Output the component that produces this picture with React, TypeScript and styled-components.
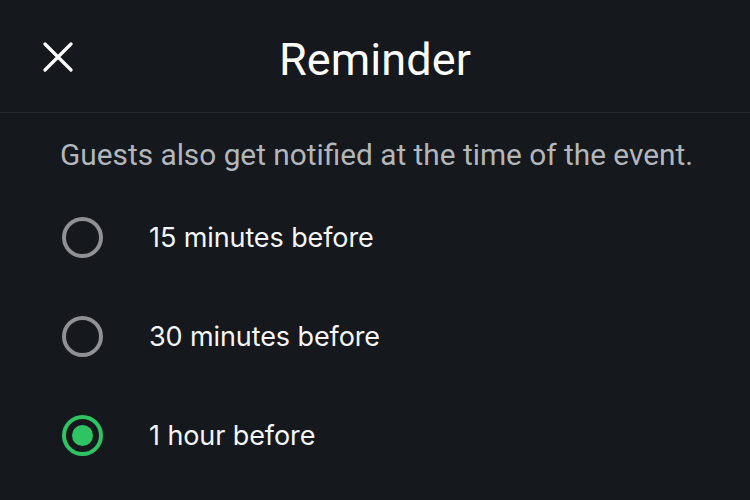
import React, { useState } from "react";
import styled, { createGlobalStyle } from "styled-components";

const GlobalStyle = createGlobalStyle`
  html, body {
    margin: 0;
    padding: 0;
    background: #15181c;
  }
  body {
    font-family: Roboto, "Liberation Sans", sans-serif;
    -webkit-font-smoothing: antialiased;
  }
`;

const Screen = styled.div`
  width: 750px;
  height: 500px;
  background: #15181c;
  color: #ffffff;
  overflow: hidden;
`;

const Header = styled.header`
  position: relative;
  height: 113px;
  display: flex;
  align-items: center;
  justify-content: center;
  border-bottom: 1.5px solid #262a2f;
  box-sizing: border-box;
`;

const CloseButton = styled.button`
  position: absolute;
  left: 40px;
  top: 39px;
  width: 36px;
  height: 36px;
  padding: 0;
  border: none;
  background: none;
  display: flex;
  align-items: center;
  justify-content: center;
  cursor: pointer;
`;

const Title = styled.h1`
  margin: 0;
  margin-top: 7px;
  font-family: Roboto, "Liberation Sans", sans-serif;
  font-size: 45px;
  font-weight: 400;
  letter-spacing: 0.1px;
  color: #ffffff;
`;

const Hint = styled.p`
  margin: 0;
  padding: 24px 0 0 60px;
  font-family: Roboto, "Liberation Sans", sans-serif;
  font-size: 29.8px;
  font-weight: 400;
  color: #b3b6ba;
  line-height: 36px;
  white-space: nowrap;
`;

const OptionList = styled.ul`
  list-style: none;
  margin: 0;
  padding: 15px 0 0 0;
`;

const Option = styled.li`
  height: 99px;
  display: flex;
  align-items: center;
  padding-left: 62px;
  cursor: pointer;
`;

const Radio = styled.span<{ $checked: boolean }>`
  width: 41px;
  height: 41px;
  box-sizing: border-box;
  border-radius: 50%;
  border: 4px solid ${(p) => (p.$checked ? "#2fc463" : "#8f9194")};
  display: flex;
  align-items: center;
  justify-content: center;
  flex-shrink: 0;
  &::after {
    content: "";
    display: ${(p) => (p.$checked ? "block" : "none")};
    width: 21px;
    height: 21px;
    border-radius: 50%;
    background: #2fc463;
  }
`;

const OptionLabel = styled.span`
  margin-left: 46px;
  font-family: Inter, Roboto, sans-serif;
  font-size: 27px;
  font-weight: 400;
  color: #f4f5f6;
  letter-spacing: -0.1px;
`;

const options = ["15 minutes before", "30 minutes before", "1 hour before"];

const App = () => {
  const [selected, setSelected] = useState(2);

  return (
    <>
      <GlobalStyle />
      <Screen>
        <Header>
          <CloseButton aria-label="Close">
            <svg width="30" height="30" viewBox="0 0 30 30">
              <path
                d="M2 2 L28 28 M28 2 L2 28"
                stroke="#ffffff"
                strokeWidth="3.2"
                strokeLinecap="round"
              />
            </svg>
          </CloseButton>
          <Title>Reminder</Title>
        </Header>
        <Hint>Guests also get notified at the time of the event.</Hint>
        <OptionList role="radiogroup">
          {options.map((label, i) => (
            <Option
              key={label}
              role="radio"
              aria-checked={selected === i}
              onClick={() => setSelected(i)}
            >
              <Radio $checked={selected === i} />
              <OptionLabel>{label}</OptionLabel>
            </Option>
          ))}
        </OptionList>
      </Screen>
    </>
  );
};

export default App;
